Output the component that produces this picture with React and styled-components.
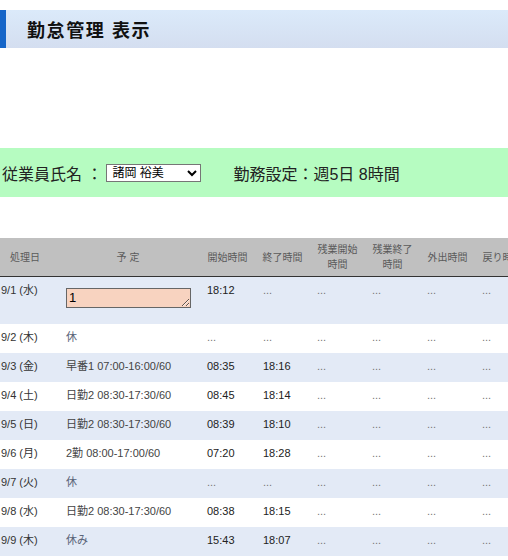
import React from 'react';
import styled, { createGlobalStyle } from 'styled-components';

const GlobalStyle = createGlobalStyle`
  body {
    margin: 0;
    background: #fff;
    font-family: "Liberation Sans", "Noto Sans CJK JP", sans-serif;
  }
`;

const Page = styled.div`
  width: 508px;
  overflow: hidden;
  padding-top: 10px;
`;

const TitleBar = styled.h1`
  margin: 0;
  height: 38px;
  display: flex;
  align-items: center;
  padding-left: 21px;
  border-left: 6px solid #1565c8;
  background: linear-gradient(#dbeafa, #d4def0);
  font-size: 18px;
  font-weight: bold;
  color: #111;
  letter-spacing: 1.6px;
`;

const InfoBand = styled.div`
  margin-top: 100px;
  height: 49px;
  background: #b6fcc1;
  display: flex;
  align-items: center;
  padding-left: 2px;
  font-size: 16px;
  color: #222;
`;

const Label = styled.span`
  margin-right: 4px;
`;

const EmployeeSelect = styled.select`
  width: 95px;
  height: 18px;
  font-size: 12px;
  line-height: 14px;
  font-family: "Liberation Sans", "Noto Sans CJK JP", sans-serif;
  border: 1px solid #767676;
  border-radius: 0;
  padding: 0 1px;
  background: #fff;
  color: #000;
  margin-right: 32px;
`;

const TableWrap = styled.div`
  margin-top: 41px;
  overflow: hidden;
`;

const Table = styled.table`
  margin-left: -6px;
  border-collapse: collapse;
  table-layout: fixed;
  width: 646px;
  font-size: 11px;
`;

const HeadCell = styled.th`
  height: 38px;
  background: #c0c0c0;
  border-bottom: 1px solid #333;
  color: #5a5a5a;
  font-size: 10px;
  font-weight: normal;
  line-height: 15px;
  text-align: center;
  vertical-align: middle;
  padding: 0;
  white-space: nowrap;
`;

const Row = styled.tr`
  background: ${(p) => (p.$shaded ? '#e3eaf6' : '#fff')};
  height: ${(p) => (p.$tall ? '47px' : '29px')};
`;

const Cell = styled.td`
  vertical-align: top;
  padding: 7px 0 0 ${(p) => p.$pad || 7}px;
  line-height: 13px;
  color: ${(p) => p.$color || '#222'};
  white-space: nowrap;
  overflow: hidden;
`;

const PlanInput = styled.textarea`
  display: block;
  margin-top: 4px;
  box-sizing: border-box;
  width: 125px;
  height: 20px;
  padding: 1px 2px;
  border: 1px solid #666;
  background: #f8d3c0;
  font-family: "Liberation Sans", sans-serif;
  font-size: 13px;
  line-height: 16px;
  color: #000;
`;

const widths = [62, 144, 55, 55, 55, 55, 55, 55, 55, 55];

const headers = [
  '処理日',
  '予 定',
  '開始時間',
  '終了時間',
  ['残業開始', '時間'],
  ['残業終了', '時間'],
  '外出時間',
  '戻り時間',
  '休憩時間',
  '備考',
];

const rows = [
  { date: '9/1 (水)', plan: null, start: '18:12', end: '...' },
  { date: '9/2 (木)', plan: '休', off: true, start: '...', end: '...' },
  { date: '9/3 (金)', plan: '早番1 07:00-16:00/60', start: '08:35', end: '18:16' },
  { date: '9/4 (土)', plan: '日勤2 08:30-17:30/60', start: '08:45', end: '18:14' },
  { date: '9/5 (日)', plan: '日勤2 08:30-17:30/60', start: '08:39', end: '18:10' },
  { date: '9/6 (月)', plan: '2勤 08:00-17:00/60', start: '07:20', end: '18:28' },
  { date: '9/7 (火)', plan: '休', off: true, start: '...', end: '...' },
  { date: '9/8 (水)', plan: '日勤2 08:30-17:30/60', start: '08:38', end: '18:15' },
  { date: '9/9 (木)', plan: '休み', off: true, start: '15:43', end: '18:07' },
];

const timeColor = (v) => (v === '...' ? '#777' : '#222');

const App = () => {
  return (
    <Page>
      <GlobalStyle />
      <TitleBar>勤怠管理 表示</TitleBar>
      <InfoBand>
        <Label>従業員氏名 ：</Label>
        <EmployeeSelect defaultValue="moroka">
          <option value="moroka">諸岡 裕美</option>
        </EmployeeSelect>
        <span>勤務設定：週5日 8時間</span>
      </InfoBand>
      <TableWrap>
        <Table>
          <colgroup>
            {widths.map((w, i) => (
              <col key={i} style={{ width: w }} />
            ))}
          </colgroup>
          <thead>
            <tr>
              {headers.map((h, i) => (
                <HeadCell key={i}>
                  {Array.isArray(h) ? (
                    <>
                      {h[0]}
                      <br />
                      {h[1]}
                    </>
                  ) : (
                    h
                  )}
                </HeadCell>
              ))}
            </tr>
          </thead>
          <tbody>
            {rows.map((r, i) => (
              <Row key={r.date} $shaded={i % 2 === 0} $tall={i === 0}>
                <Cell $color="#333">{r.date}</Cell>
                <Cell $pad={10} $color={r.off ? '#5a6478' : '#444'}>
                  {r.plan === null ? <PlanInput defaultValue="1" /> : r.plan}
                </Cell>
                <Cell $color={timeColor(r.start)}>{r.start}</Cell>
                <Cell $pad={8} $color={timeColor(r.end)}>{r.end}</Cell>
                <Cell $color="#777">...</Cell>
                <Cell $color="#777">...</Cell>
                <Cell $color="#777">...</Cell>
                <Cell $color="#777">...</Cell>
                <Cell $color="#777">...</Cell>
                <Cell $color="#777">...</Cell>
              </Row>
            ))}
          </tbody>
        </Table>
      </TableWrap>
    </Page>
  );
};

export default App;
